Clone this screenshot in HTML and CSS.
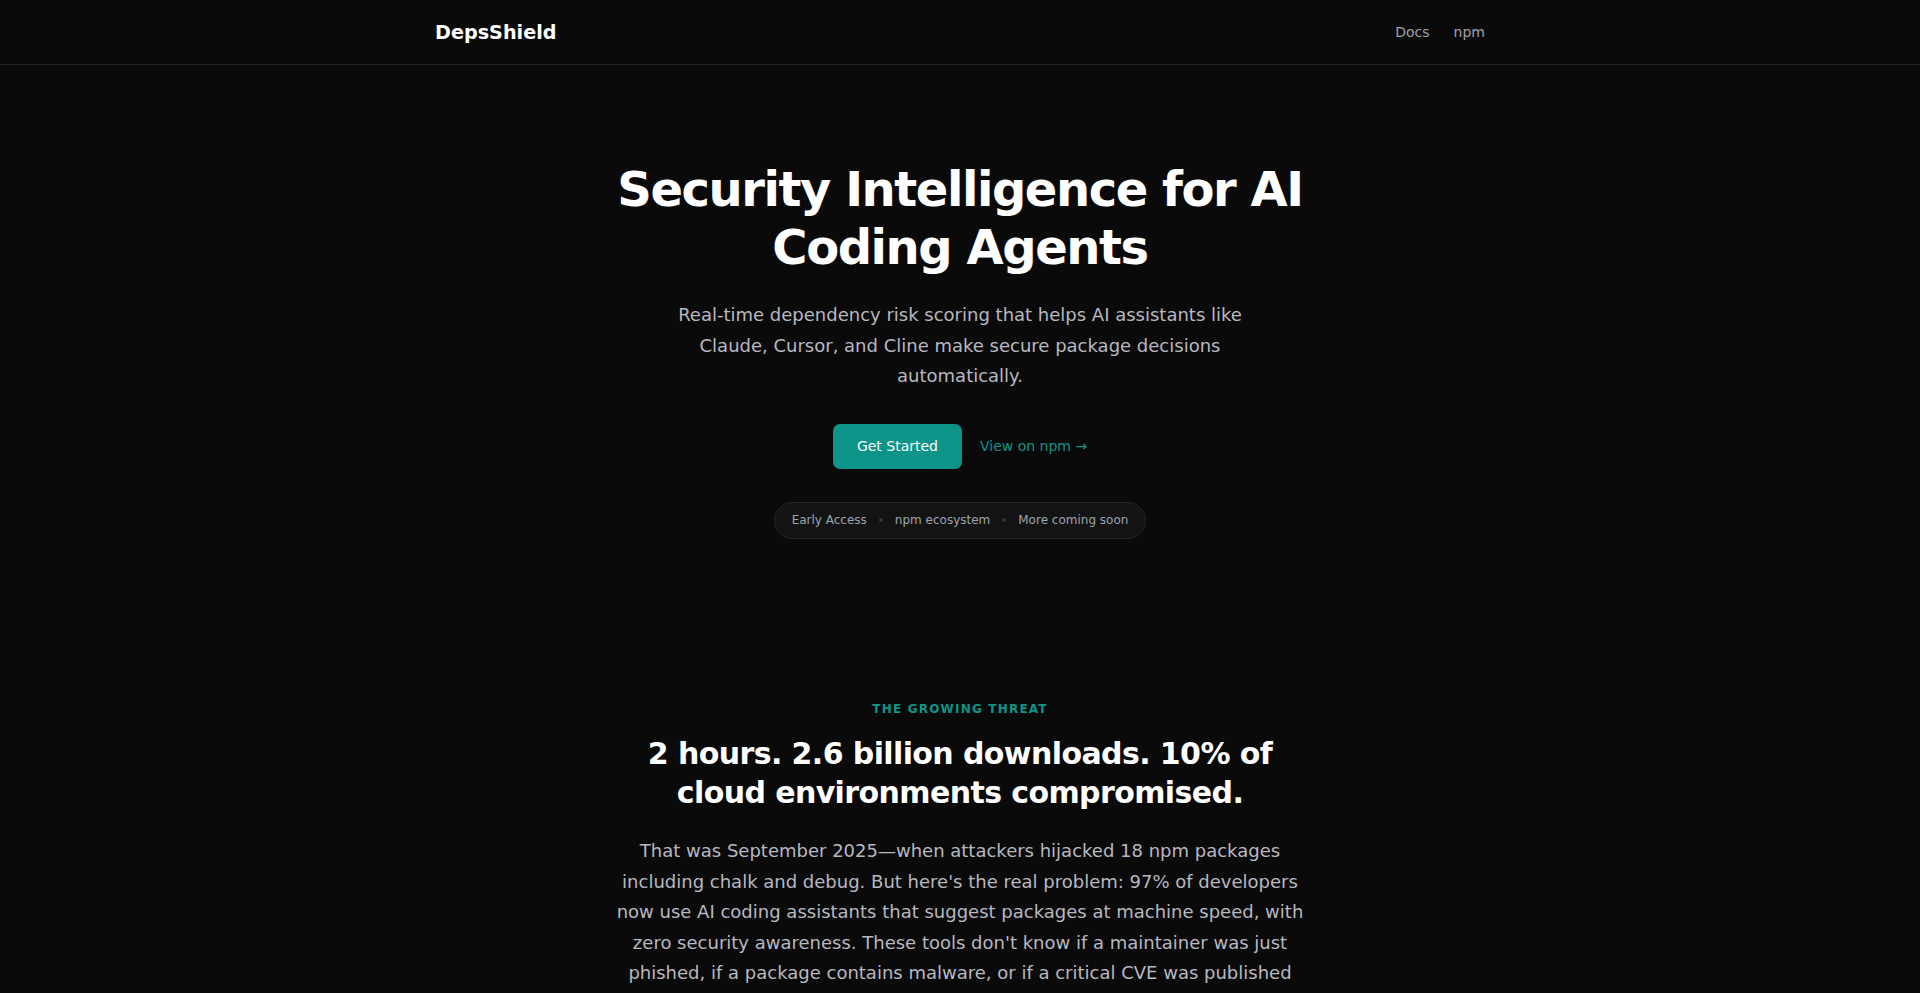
FILE: index.html
```html
<!DOCTYPE html>
<html lang="en">
<head>
<meta charset="utf-8">
<title>DepsShield — Security Intelligence for AI Coding Agents</title>
<link rel="stylesheet" href="styles.css">
</head>
<body>
<header class="site-header">
  <div class="container header-inner">
    <a class="logo" href="#">DepsShield</a>
    <nav class="nav">
      <a href="#">Docs</a>
      <a href="#">npm</a>
    </nav>
  </div>
</header>
<main>
  <section class="hero">
    <h1 class="hero-title">Security Intelligence for AI Coding Agents</h1>
    <p class="hero-sub">Real-time dependency risk scoring that helps AI assistants like Claude, Cursor, and Cline make secure package decisions automatically.</p>
    <div class="hero-actions">
      <a class="btn-primary" href="#">Get Started</a>
      <a class="btn-link" href="#">View on npm →</a>
    </div>
    <div class="pill">
      <span>Early Access</span>
      <span class="dot"></span>
      <span>npm ecosystem</span>
      <span class="dot"></span>
      <span>More coming soon</span>
    </div>
  </section>
  <section class="threat">
    <div class="eyebrow">THE GROWING THREAT</div>
    <h2 class="threat-title">2 hours. 2.6 billion downloads. 10% of cloud environments compromised.</h2>
    <p class="threat-text">That was September 2025—when attackers hijacked 18 npm packages including chalk and debug. But here's the real problem: 97% of developers now use AI coding assistants that suggest packages at machine speed, with zero security awareness. These tools don't know if a maintainer was just phished, if a package contains malware, or if a critical CVE was published an hour ago.</p>
  </section>
</main>
</body>
</html>
```
FILE: styles.css
```css
* { box-sizing: border-box; }
html, body { margin: 0; padding: 0; }
body {
  background: #0a0a0a;
  color: #ededed;
  font-family: "DejaVu Sans", "Liberation Sans", sans-serif;
}
a { text-decoration: none; color: inherit; }

.container {
  max-width: 1100px;
  margin: 0 auto;
  padding: 0 25px;
}
.site-header {
  height: 65px;
  border-bottom: 1px solid #262626;
  background: #0a0a0a;
}
.header-inner {
  height: 64px;
  display: flex;
  align-items: center;
  justify-content: space-between;
}
.logo {
  font-size: 19.2px;
  font-weight: 700;
  color: #ffffff;
}
.nav {
  display: flex;
  gap: 24px;
  font-size: 14px;
  color: #a1a1aa;
}

.hero {
  padding: 96px 20px 80px;
  display: flex;
  flex-direction: column;
  align-items: center;
  text-align: center;
}
.hero-title {
  margin: 0;
  max-width: 800px;
  font-size: 48px;
  line-height: 1.2;
  font-weight: 700;
  letter-spacing: -0.03em;
  color: #ffffff;
}
.hero-sub {
  margin: 24px 0 0;
  max-width: 600px;
  font-size: 18px;
  line-height: 1.7;
  color: #b8b8c0;
}
.hero-actions {
  margin-top: 32px;
  display: flex;
  align-items: center;
  gap: 18px;
}
.btn-primary {
  background: #0d9488;
  color: #ffffff;
  font-size: 14px;
  line-height: 21px;
  padding: 12px 24px;
  border-radius: 7px;
}
.btn-link {
  color: #0d9488;
  font-size: 14px;
}
.pill {
  margin-top: 33px;
  display: flex;
  align-items: center;
  gap: 12px;
  height: 37px;
  padding: 0 17px;
  border: 1px solid #262626;
  border-radius: 999px;
  background: #131313;
  font-size: 12px;
  color: #9ca3af;
}
.dot {
  width: 4px;
  height: 4px;
  border-radius: 50%;
  background: #333338;
}

.threat {
  padding: 81px 20px 80px;
  display: flex;
  flex-direction: column;
  align-items: center;
  text-align: center;
}
.eyebrow {
  font-size: 12px;
  line-height: 18px;
  font-weight: 700;
  letter-spacing: 1.2px;
  color: #0d9488;
}
.threat-title {
  margin: 16px 0 0;
  max-width: 700px;
  font-size: 30px;
  line-height: 39px;
  font-weight: 700;
  letter-spacing: -0.02em;
  color: #ffffff;
}
.threat-text {
  margin: 24px 0 0;
  max-width: 689px;
  font-size: 18px;
  line-height: 1.7;
  color: #b8b8c0;
}
```
